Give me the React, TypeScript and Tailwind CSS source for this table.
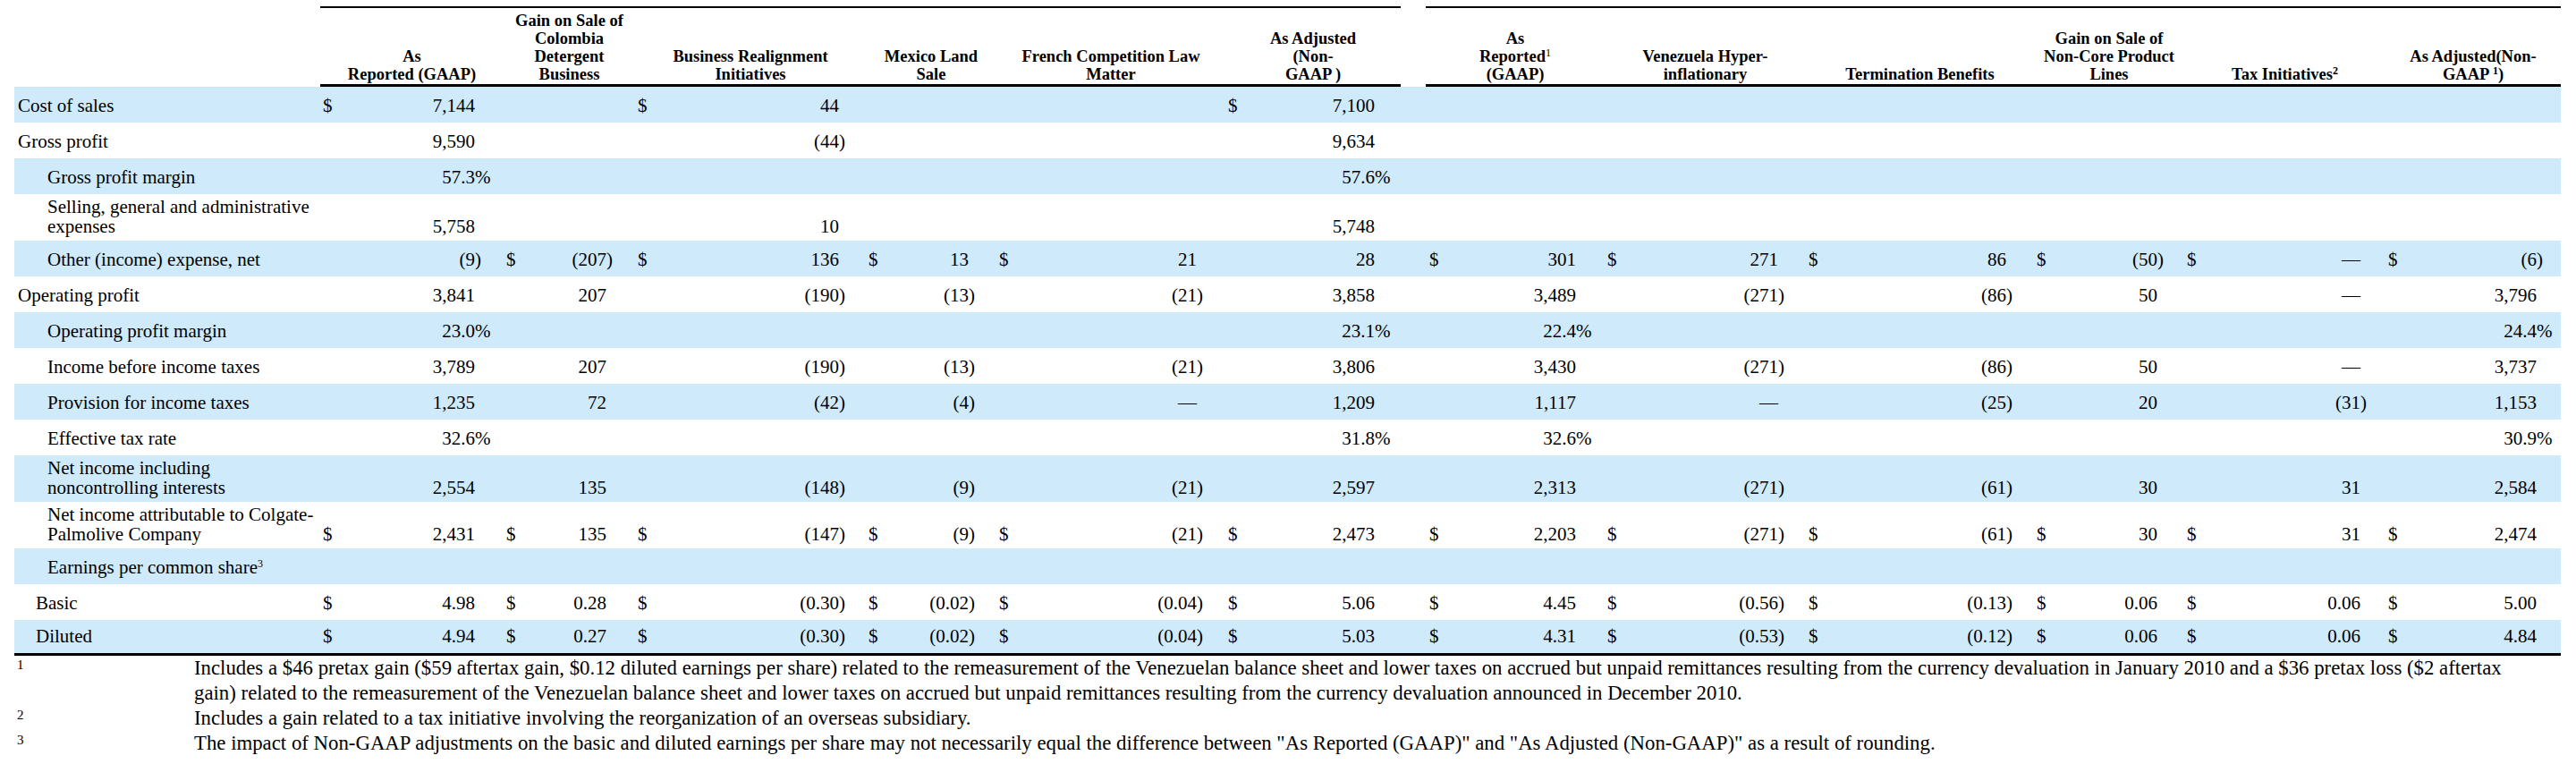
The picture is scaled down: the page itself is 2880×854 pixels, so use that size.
import React from "react";

const GRID =
  "grid grid-cols-[342px_205px_147px_258px_146px_256px_196px_28px_200px_225px_255px_168px_225px_196px]";

const SUFFIX_W = [
  "w-[32px]",
  "w-[32px]",
  "w-[30px]",
  "w-[31px]",
  "w-[32px]",
  "w-[29px]",
  "w-[32px]",
  "w-[31px]",
  "w-[31px]",
  "w-[30px]",
  "w-[28px]",
  "w-[27px]",
];

type Cell = string;

type Row = {
  label: React.ReactNode;
  indent: 0 | 1 | 2;
  double?: boolean;
  blue: boolean;
  cells: Cell[];
};

const E = "";

const rows: Row[] = [
  {
    label: "Cost of sales",
    indent: 0,
    blue: true,
    cells: ["$7,144", E, "$44", E, E, "$7,100", E, E, E, E, E, E],
  },
  {
    label: "Gross profit",
    indent: 0,
    blue: false,
    cells: ["9,590", E, "(44)", E, E, "9,634", E, E, E, E, E, E],
  },
  {
    label: "Gross profit margin",
    indent: 1,
    blue: true,
    cells: ["57.3%", E, E, E, E, "57.6%", E, E, E, E, E, E],
  },
  {
    label: "Selling, general and administrative expenses",
    indent: 1,
    double: true,
    blue: false,
    cells: ["5,758", E, "10", E, E, "5,748", E, E, E, E, E, E],
  },
  {
    label: "Other (income) expense, net",
    indent: 1,
    blue: true,
    cells: ["(9)", "$(207)", "$136", "$13", "$21", "28", "$301", "$271", "$86", "$(50)", "$—", "$(6)"],
  },
  {
    label: "Operating profit",
    indent: 0,
    blue: false,
    cells: ["3,841", "207", "(190)", "(13)", "(21)", "3,858", "3,489", "(271)", "(86)", "50", "—", "3,796"],
  },
  {
    label: "Operating profit margin",
    indent: 1,
    blue: true,
    cells: ["23.0%", E, E, E, E, "23.1%", "22.4%", E, E, E, E, "24.4%"],
  },
  {
    label: "Income before income taxes",
    indent: 1,
    blue: false,
    cells: ["3,789", "207", "(190)", "(13)", "(21)", "3,806", "3,430", "(271)", "(86)", "50", "—", "3,737"],
  },
  {
    label: "Provision for income taxes",
    indent: 1,
    blue: true,
    cells: ["1,235", "72", "(42)", "(4)", "—", "1,209", "1,117", "—", "(25)", "20", "(31)", "1,153"],
  },
  {
    label: "Effective tax rate",
    indent: 1,
    blue: false,
    cells: ["32.6%", E, E, E, E, "31.8%", "32.6%", E, E, E, E, "30.9%"],
  },
  {
    label: "Net income including noncontrolling interests",
    indent: 1,
    double: true,
    blue: true,
    cells: ["2,554", "135", "(148)", "(9)", "(21)", "2,597", "2,313", "(271)", "(61)", "30", "31", "2,584"],
  },
  {
    label: "Net income attributable to Colgate-Palmolive Company",
    indent: 1,
    double: true,
    blue: false,
    cells: ["$2,431", "$135", "$(147)", "$(9)", "$(21)", "$2,473", "$2,203", "$(271)", "$(61)", "$30", "$31", "$2,474"],
  },
  {
    label: (
      <>
        Earnings per common share<span className="relative -top-[7px] text-[12px] leading-none">3</span>
      </>
    ),
    indent: 1,
    blue: true,
    cells: [E, E, E, E, E, E, E, E, E, E, E, E],
  },
  {
    label: "Basic",
    indent: 2,
    blue: false,
    cells: ["$4.98", "$0.28", "$(0.30)", "$(0.02)", "$(0.04)", "$5.06", "$4.45", "$(0.56)", "$(0.13)", "$0.06", "$0.06", "$5.00"],
  },
  {
    label: "Diluted",
    indent: 2,
    blue: true,
    cells: ["$4.94", "$0.27", "$(0.30)", "$(0.02)", "$(0.04)", "$5.03", "$4.31", "$(0.53)", "$(0.12)", "$0.06", "$0.06", "$4.84"],
  },
];

function DataCell({ v, i }: { v: string; i: number }) {
  let dollar = false;
  let s = v;
  if (s.startsWith("$")) {
    dollar = true;
    s = s.slice(1);
  }
  let suffix = "";
  if (s.endsWith(")") || s.endsWith("%")) {
    suffix = s.slice(-1);
    s = s.slice(0, -1);
  }
  return (
    <div className={`flex ${i === 6 ? "pl-[4px]" : "pl-[3px]"}`}>
      <span>{dollar ? "$" : ""}</span>
      <span className="flex-1 text-right whitespace-nowrap">{s}</span>
      <span className={`${SUFFIX_W[i]} text-left`}>{suffix}</span>
    </div>
  );
}

function Header({ children }: { children?: React.ReactNode }) {
  return (
    <div className="flex h-[90px] items-end justify-center border-t-2 border-b-[3px] border-black pb-[1px] text-center font-bold text-[18.5px] leading-[20px]">
      <div>{children}</div>
    </div>
  );
}

function Sup({ n, bold }: { n: string; bold?: boolean }) {
  return (
    <span className={`relative -top-[6px] text-[12px] leading-none ${bold ? "font-bold" : "font-normal"}`}>{n}</span>
  );
}

export default function App() {
  return (
    <div className="w-[2880px] h-[854px] bg-white text-black font-['Liberation_Serif','Times_New_Roman',serif] overflow-hidden">
      <div className="pl-[16px]">
        {/* header */}
        <div className={`${GRID} mt-[7px]`}>
          <div />
          <Header>
            As
            <br />
            Reported (GAAP)
          </Header>
          <Header>
            Gain on Sale of
            <br />
            Colombia
            <br />
            Detergent
            <br />
            Business
          </Header>
          <Header>
            Business Realignment
            <br />
            Initiatives
          </Header>
          <Header>
            Mexico Land
            <br />
            Sale
          </Header>
          <Header>
            French Competition Law
            <br />
            Matter
          </Header>
          <Header>
            As Adjusted
            <br />
            (Non-
            <br />
            GAAP )
          </Header>
          <div />
          <Header>
            As
            <br />
            Reported
            <Sup n="1" />
            <br />
            (GAAP)
          </Header>
          <Header>
            Venezuela Hyper-
            <br />
            inflationary
          </Header>
          <Header>Termination Benefits</Header>
          <Header>
            Gain on Sale of
            <br />
            Non-Core Product
            <br />
            Lines
          </Header>
          <Header>
            Tax Initiatives
            <Sup n="2" bold />
          </Header>
          <Header>
            As Adjusted(Non-
            <br />
            GAAP <Sup n="1" bold />)
          </Header>
        </div>

        {/* body */}
        <div className="w-[2847px] text-[21px] leading-[22px]">
          {rows.map((r, ri) => (
            <div
              key={ri}
              className={`${GRID} items-end ${r.double ? "h-[52px] pb-[5px]" : "h-[40px] pb-[8px]"} ${
                r.blue ? "bg-[#cfeafb]" : "bg-white"
              } ${ri === rows.length - 1 ? "border-b-[3px] border-black" : ""}`}
            >
              <div
                className={`pr-[6px] ${
                  r.indent === 0 ? "pl-[4px]" : r.indent === 1 ? "pl-[37px]" : "pl-[24px]"
                }`}
              >
                {r.label}
              </div>
              {r.cells.slice(0, 6).map((v, i) => (
                <DataCell key={i} v={v} i={i} />
              ))}
              <div />
              {r.cells.slice(6).map((v, i) => (
                <DataCell key={i + 6} v={v} i={i + 6} />
              ))}
            </div>
          ))}
        </div>

        {/* footnotes */}
        <div className="text-[22.8px] leading-[28px]">
          <div className="flex">
            <div className="w-[201px] shrink-0 pl-[3px] text-[15px] leading-[20px]">1</div>
            <div className="whitespace-nowrap">
              Includes a $46 pretax gain ($59 aftertax gain, $0.12 diluted earnings per share) related to the
              remeasurement of the Venezuelan balance sheet and lower taxes on accrued but unpaid remittances resulting
              from the currency devaluation in January 2010 and a $36 pretax loss ($2 aftertax
              <br />
              gain) related to the remeasurement of the Venezuelan balance sheet and lower taxes on accrued but unpaid
              remittances resulting from the currency devaluation announced in December 2010.
            </div>
          </div>
          <div className="flex">
            <div className="w-[201px] shrink-0 pl-[3px] text-[15px] leading-[20px]">2</div>
            <div className="whitespace-nowrap">
              Includes a gain related to a tax initiative involving the reorganization of an overseas subsidiary.
            </div>
          </div>
          <div className="flex">
            <div className="w-[201px] shrink-0 pl-[3px] text-[15px] leading-[20px]">3</div>
            <div className="whitespace-nowrap">
              The impact of Non-GAAP adjustments on the basic and diluted earnings per share may not necessarily equal
              the difference between "As Reported (GAAP)" and "As Adjusted (Non-GAAP)" as a result of rounding.
            </div>
          </div>
        </div>
      </div>
    </div>
  );
}
